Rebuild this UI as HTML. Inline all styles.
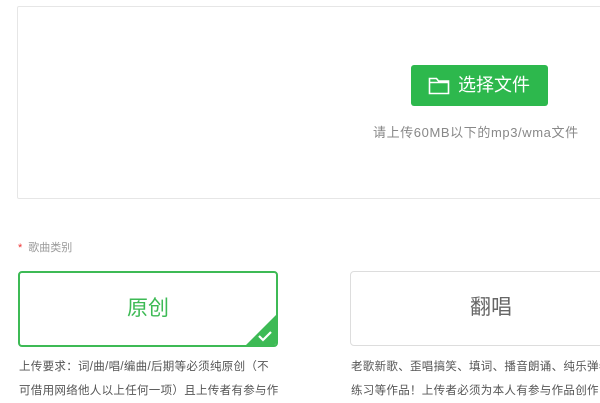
<!DOCTYPE html>
<html><head><meta charset="utf-8"><style>
body{margin:0;width:600px;height:400px;overflow:hidden;background:#fff;font-family:"Liberation Sans","Noto Sans CJK SC",sans-serif;position:relative}
.box{position:absolute;left:17px;top:6px;width:600px;height:191px;border:1px solid #e6e6e6;border-radius:2px}
.btn{position:absolute;left:411px;top:65px;width:137px;height:41px;background:#2db84d;border-radius:3px;color:#fff;font-size:18px;line-height:41px}
.btn span{position:absolute;left:47px;top:0}
.hint{position:absolute;left:373px;top:122px;font-size:13px;letter-spacing:0.6px;color:#888;white-space:nowrap}
.lab{position:absolute;left:18px;top:239px;font-size:11px;color:#999}
.lab b{color:#e33;font-weight:normal;margin-right:6px}
.card{position:absolute;top:271px;height:72px;border-radius:4px;font-size:21px;text-align:center;line-height:72px}
.c1{left:18px;width:256px;border:2px solid #3dba55;color:#3dba55;overflow:hidden}
.c2{left:350px;width:280px;border:1px solid #ddd;color:#666;height:73px}
.desc{position:absolute;font-size:11.5px;letter-spacing:0.3px;color:#555;line-height:24px;white-space:nowrap}
</style></head><body>
<div class="box"></div>
<div class="btn"><svg style="position:absolute;left:17px;top:11px" width="22" height="19" viewBox="0 0 22 19"><path d="M1.5 2.5h7l2 2.5h10v12.5h-19z M1.5 6.5h19" fill="none" stroke="#fff" stroke-width="1.6"/></svg><span>选择文件</span></div>
<div class="hint">请上传60MB以下的mp3/wma文件</div>
<div class="lab"><b>*</b>歌曲类别</div>
<div class="card c1">原创<svg style="position:absolute;right:0;bottom:0" width="30" height="30"><polygon points="30,0 30,30 0,30" fill="#3dba55"/><path d="M13 21l4 4 8-8" fill="none" stroke="#fff" stroke-width="2.2"/></svg></div>
<div class="card c2">翻唱</div>
<div class="desc" style="left:19px;top:355px">上传要求：词/曲/唱/编曲/后期等必须纯原创（不<br>可借用网络他人以上任何一项）且上传者有参与作</div>
<div class="desc" style="left:351px;top:355px">老歌新歌、歪唱搞笑、填词、播音朗诵、纯乐弹奏<br>练习等作品！上传者必须为本人有参与作品创作</div>
</body></html>
